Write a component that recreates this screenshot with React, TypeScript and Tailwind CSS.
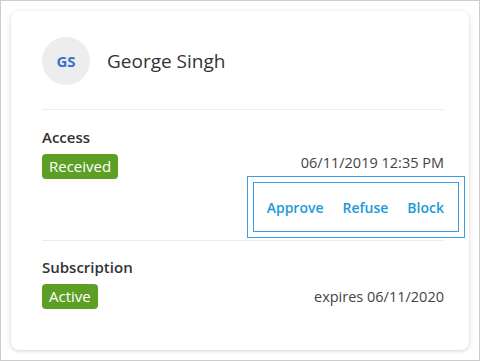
export default function App() {
  return (
    <div className="w-[480px] h-[361px] border border-[#cdcdcd] bg-white p-[10px] font-['Open_Sans',sans-serif]">
      <div className="h-full rounded-lg bg-white shadow-[0_1px_4px_rgba(0,0,0,0.18)] pl-[31px] pr-[25px] pt-[26px]">
        {/* cabecera */}
        <div className="flex items-center gap-[17px]">
          <div className="w-12 h-12 rounded-full bg-[#ededed] flex items-center justify-center text-[15px] font-bold text-[#3a6fd0]">
            GS
          </div>
          <div className="text-[19px] text-[#333]">George Singh</div>
        </div>
        <div className="mt-[24px] h-px bg-[#ececec]" />

        {/* acceso */}
        <div className="pt-[17px]">
          <div className="text-[15px] font-semibold text-[#333] leading-5">Access</div>
          <div className="mt-[7px] flex items-center justify-between">
            <span className="h-[25px] px-[7px] rounded-[4px] bg-[#5d9f25] text-white text-[15px] leading-[25px]">Received</span>
            <span className="text-[14.5px] text-[#444] -mt-2">06/11/2019 12:35 PM</span>
          </div>
          <div className="flex justify-end mt-[3px]">
            <div className="-mr-[15px] h-[50px] pl-[13px] pr-[14px] flex items-center gap-[19px] border border-[#3e9ce0] outline outline-[#3e9ce0] outline-offset-[5px] text-[14px] font-semibold text-[#1c9ad6]">
              <a href="#">Approve</a>
              <a href="#">Refuse</a>
              <a href="#">Block</a>
            </div>
          </div>
        </div>
        <div className="mt-[8px] h-px bg-[#ececec]" />

        {/* suscripcion */}
        <div className="pt-[16px]">
          <div className="text-[15px] font-semibold text-[#333] leading-5">Subscription</div>
          <div className="mt-[7px] flex items-center justify-between">
            <span className="h-[25px] px-[7px] rounded-[4px] bg-[#5d9f25] text-white text-[15px] leading-[25px]">Active</span>
            <span className="text-[14.5px] text-[#444]">expires 06/11/2020</span>
          </div>
        </div>
      </div>
    </div>
  );
}
